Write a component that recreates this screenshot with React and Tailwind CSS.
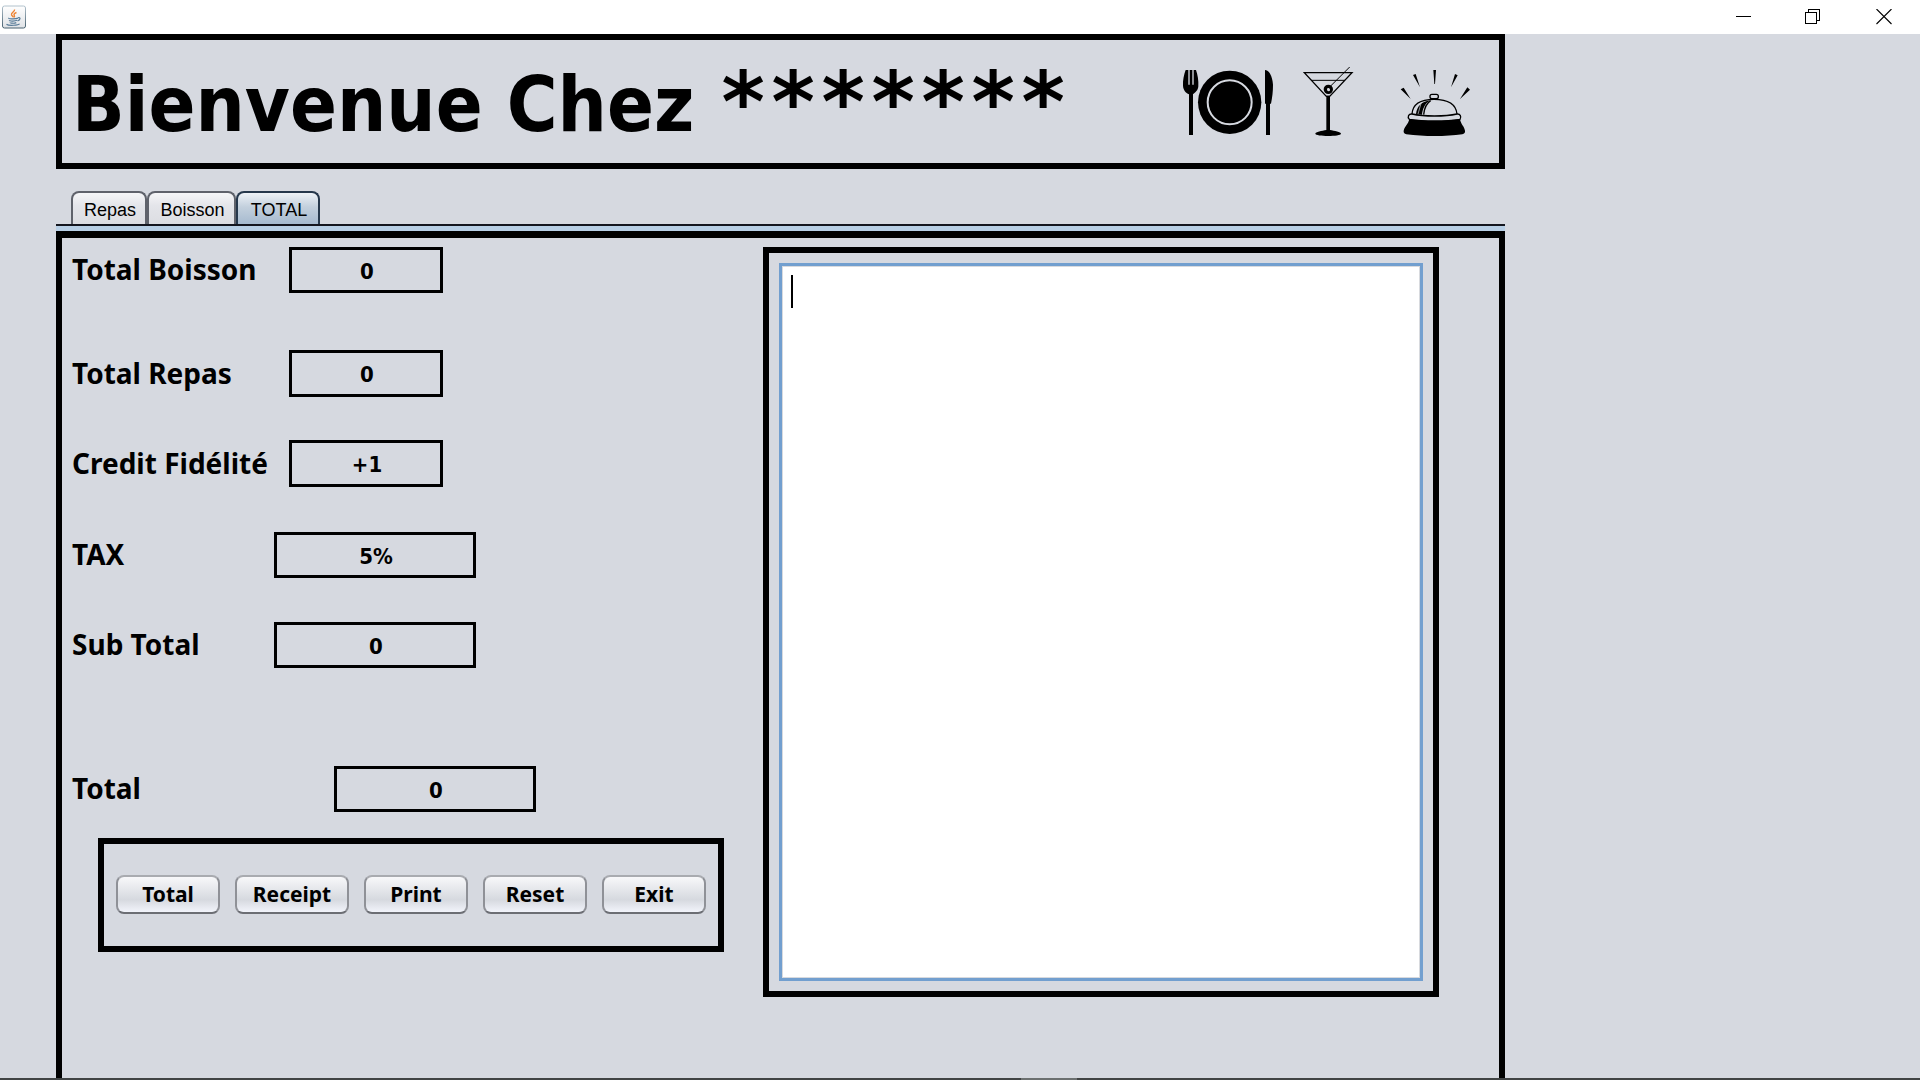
import React from "react";

const FIELDS = [
  { id: "boisson", label: "Total Boisson", value: "0", row: "h-[46px]", col: "w-[217px]", box: "w-[154px]" },
  { id: "repas", label: "Total Repas", value: "0", row: "mt-[57px] h-[47px]", col: "w-[217px]", box: "w-[154px]" },
  { id: "credit", label: "Credit Fidélité", value: "+1", row: "mt-[43px] h-[47px]", col: "w-[217px]", box: "w-[154px]" },
  { id: "tax", label: "TAX", value: "5%", row: "mt-[45px] h-[46px]", col: "w-[202px]", box: "w-[202px]" },
  { id: "subtotal", label: "Sub Total", value: "0", row: "mt-11 h-[46px]", col: "w-[202px]", box: "w-[202px]" },
  { id: "total", label: "Total", value: "0", row: "mt-[98px] h-[46px]", col: "w-[262px]", box: "w-[202px]" },
];

const ACTIONS = [
  { label: "Total", width: "w-[104px]" },
  { label: "Receipt", width: "w-[114px]" },
  { label: "Print", width: "w-[104px]" },
  { label: "Reset", width: "w-[104px]" },
  { label: "Exit", width: "w-[104px]" },
];

function JavaIcon() {
  return (
    <svg className="h-6 w-6" viewBox="0 0 24 24" fill="none" aria-hidden="true">
      <defs>
        <linearGradient id="java-bg" x1="0" y1="0" x2="0" y2="1">
          <stop offset="0" stopColor="#ffffff" />
          <stop offset="1" stopColor="#dfe2e6" />
        </linearGradient>
        <linearGradient id="java-edge" x1="0" y1="0" x2="0" y2="1">
          <stop offset="0" stopColor="#b3c3cd" />
          <stop offset="1" stopColor="#47606f" />
        </linearGradient>
      </defs>
      <rect x="0.5" y="1" width="23" height="22" rx="2" fill="url(#java-bg)" stroke="url(#java-edge)" />
      <path d="M12.500 4.500c.6 2-3.600 3-3 5.300.3 1 1.500 1.500 2 2.400M14.500 7.500c-2 .8-3 1.700-2.300 2.800.7.900.4 1.500-.5 2.200" stroke="#ee8434" strokeWidth="1.400" />
      <path d="M7 13c-2 .8 6 1.300 9 .1M7.500 15.200c-.8 1 5.500 1.200 7.500.1M8.300 17.400c-.5.900 4 1.200 6 .2M16 12.700c3-.9 2.500 2.300-.5 3.200M4.500 19.200c2 1.800 12 1.200 13-.5" stroke="#587b98" strokeWidth="1.200" />
    </svg>
  );
}

function PlateIcon() {
  return (
    <svg className="h-[72px] w-[92px]" viewBox="66 75 276 216" aria-hidden="true">
      <path d="M77 87h8v44h4V87h8v44h4V87h7c5 14 8 32 7 49-1 13-9 18-16 24v122H87V160c-10-5-17-12-18-26-1-17 3-33 8-47Z" />
      <circle cx="209" cy="184" r="95" />
      <circle cx="209" cy="184" r="66" fill="none" stroke="#d6d9e0" strokeWidth="6" />
      <path d="M315 87c14 1 22 20 24 44 0 20-2 38-6 57h-3v94h-12v-94h-3Z" />
    </svg>
  );
}

function CocktailIcon() {
  return (
    <svg className="h-[72px] w-[52px]" viewBox="426 75 156 216" fill="none" stroke="#000" aria-hidden="true">
      <path d="M433 95h143l-67 71h-10Z" strokeWidth="4" />
      <path d="M453 118h102" strokeWidth="3" />
      <path d="M569 78l-62 62" strokeWidth="3" />
      <circle cx="505" cy="145" r="9" strokeWidth="10" />
      <circle cx="506" cy="147" r="4" fill="#d6d9e0" stroke="none" />
      <path d="M499 164h11v103c13 3 33 5 33 11 0 9-77 9-77 0 0-6 20-8 33-11Z" fill="#000" stroke="none" />
    </svg>
  );
}

function BellIcon() {
  return (
    <svg className="h-[72px] w-[72px]" viewBox="717 75 216 216" aria-hidden="true">
      <path d="M820 87h8l-3 42h-2ZM759 102l8-3 13 40ZM885 99l8 4-20 36ZM722 145l9-5 21 34ZM922 139l8 7-30 28Z" />
      <g fill="none" stroke="#000" strokeWidth="4">
        <rect x="810" y="160" width="25" height="13" rx="6" />
        <path d="M756 219c2-31 24-44 66-44s66 13 69 44" />
        <path d="M756 219c36 8 99 8 135 0 10-1 14 9 9 16-43 7-107 7-152 0-7-7-2-17 8-16Z" />
      </g>
      <path d="M768 219c3-22 14-36 43-41-15 9-23 23-25 43Z" />
      <path d="M791 221c2-20 8-34 21-42" fill="none" stroke="#000" strokeWidth="4" />
      <path d="M748 235c45 5 108 5 152 0 3 16 12 20 15 34 1 6-2 9-8 11-50 7-115 7-168 0-6-2-9-5-8-11 3-13 13-18 17-34Z" />
      <path d="M784 184l-10 35" fill="none" stroke="#d6d9e0" strokeWidth="2" />
    </svg>
  );
}

function TitleBar() {
  return (
    <header className="flex h-[34px] shrink-0 items-center justify-between bg-white pl-[2px]">
      <JavaIcon />
      <div className="flex h-full items-center">
        <button type="button" aria-label="Minimize" className="flex h-full w-[70px] items-center justify-center">
          <svg className="h-4 w-4" viewBox="0 0 16 16" shapeRendering="crispEdges" aria-hidden="true">
            <path d="M1 7h15v1H1Z" />
          </svg>
        </button>
        <button type="button" aria-label="Restore" className="flex h-full w-[70px] items-center justify-center">
          <svg className="h-4 w-4" viewBox="0 0 16 16" fill="none" stroke="#000" shapeRendering="crispEdges" aria-hidden="true">
            <path d="M.5 3.500h11v11H.5ZM3.500 3V.5h11v11H12" />
          </svg>
        </button>
        <button type="button" aria-label="Close" className="flex h-full w-[72px] items-center justify-center">
          <svg className="h-4 w-4" viewBox="0 0 16 16" fill="none" stroke="#000" strokeWidth="1.100" aria-hidden="true">
            <path d="M.5 0l15 15M15.500 0l-15 15" />
          </svg>
        </button>
      </div>
    </header>
  );
}

function Tab({ label, width, selected }) {
  return (
    <button
      type="button"
      role="tab"
      aria-selected={selected}
      className={
        "h-[33px] rounded-t-lg border-2 border-b-0 pt-[2px] pl-[2px] text-center text-[18px] leading-6 " +
        width +
        (selected
          ? " border-[#26384c] bg-linear-to-b from-[#eef2f7] via-[#c3d0dd] via-45% to-[#a6bacf]"
          : " border-[#5f626b] bg-linear-to-b from-[#f6f6f8] via-[#e4e5ea] via-40% to-[#dcdde2]")
      }
    >
      {label}
    </button>
  );
}

export default function App() {
  return (
    <div className="flex min-h-screen flex-col bg-[#d6d9e0] font-['Noto_Sans',sans-serif] text-black">
      <TitleBar />
      <main className="mr-[415px] ml-14 flex grow flex-col">
        <section className="flex h-[135px] items-center justify-between border-6 border-black pr-[28px] pl-[10px]">
          <h1 className="pt-[6px] font-['DejaVu_Sans_Condensed','DejaVu_Sans',sans-serif] text-[77px] leading-[100px] font-bold whitespace-pre">
            Bienvenue Chez{" "}
            <span className="font-['DejaVu_Sans_Mono',monospace] text-[83px] leading-none">*******</span>
          </h1>
          <div className="flex items-center">
            <PlateIcon />
            <div className="ml-7"><CocktailIcon /></div>
            <div className="ml-[45px]"><BellIcon /></div>
          </div>
        </section>

        <div role="tablist" className="mt-[22px] flex border-b-2 border-[#14161f] pl-[15px] font-['Liberation_Sans',Arial,sans-serif]">
          <Tab label="Repas" width="w-[76px]" />
          <Tab label="Boisson" width="w-[89px]" />
          <Tab label="TOTAL" width="w-[84px]" selected />
        </div>
        <div className="h-[5px] bg-[#b8cfe5]" />

        <section role="tabpanel" className="flex grow items-start justify-between border-x-6 border-t-7 border-black pt-[9px] pr-[60px] pl-[10px]">
          <form onSubmit={(e) => e.preventDefault()}>
            {FIELDS.map((f) => (
              <div key={f.id} className={"flex items-center " + f.row}>
                <label htmlFor={f.id} className={"pb-[2px] text-[28px] leading-8 font-bold " + f.col}>
                  {f.label}
                </label>
                <input
                  id={f.id}
                  readOnly
                  defaultValue={f.value}
                  className={"h-full border-3 border-black bg-transparent pt-[2px] pl-[2px] text-center font-['DejaVu_Sans_Condensed','DejaVu_Sans',sans-serif] text-[22px] font-bold outline-none " + f.box}
                />
              </div>
            ))}
            <div className="mt-[26px] ml-[26px] flex h-[114px] items-center gap-[15px] border-6 border-black px-[12px] pb-[2px]">
              {ACTIONS.map((a) => (
                <button
                  key={a.label}
                  type="button"
                  className={
                    "flex h-[39px] shrink-0 items-center justify-center rounded-lg border-2 border-t-[#a9abb0] border-r-[#8f9197] border-b-[#6c6e74] border-l-[#8f9197] bg-linear-to-b from-[#f8f8fa] via-[#d6d9df] via-65% to-[#f2f4fb] text-[21px] leading-8 font-bold " +
                    a.width
                  }
                >
                  {a.label}
                </button>
              ))}
            </div>
          </form>

          <div className="relative flex h-[750px] w-[676px] border-6 border-black p-[10px]">
            <textarea
              aria-label="Receipt"
              className="w-full resize-none border-3 border-[#729fcf] bg-white p-2 text-[24px] shadow-[inset_0_0_0_1px_#d8dade] outline-none"
            />
            <span className="absolute top-[22px] left-[22px] h-[33px] w-[2px] bg-black" />
          </div>
        </section>
      </main>
      <footer className="flex h-[2px] shrink-0 justify-center bg-[#414444]">
        <div className="ml-[178px] w-[56px] bg-[#6c7070]" />
      </footer>
    </div>
  );
}
